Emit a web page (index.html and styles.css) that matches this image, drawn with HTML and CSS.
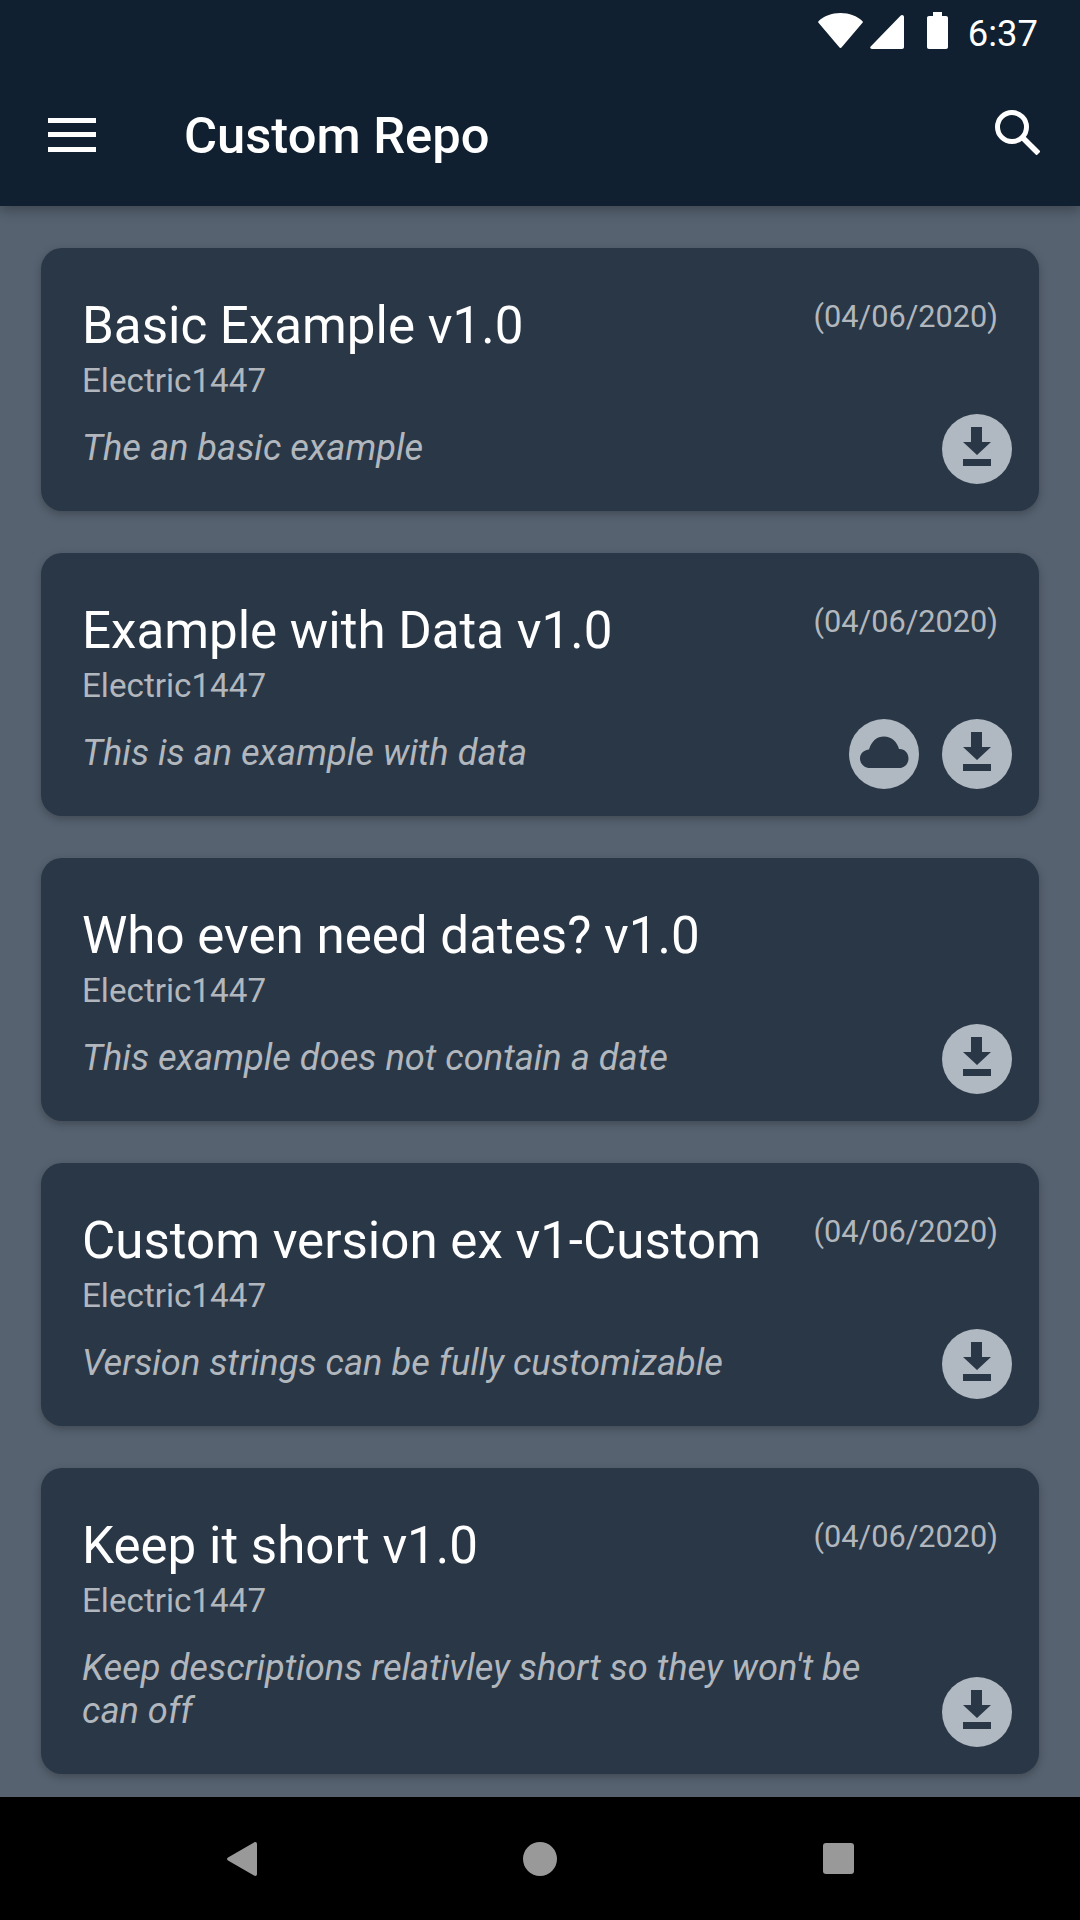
FILE: index.html
```html
<!DOCTYPE html>
<html lang="en">

<head>
    <meta charset="UTF-8">
    <meta name="viewport" content="width=device-width, initial-scale=1.0">
    <title>Custom Repo</title>
    <link rel="stylesheet" href="styles.css">
</head>

<body>
    <header class="app-header">
        <div class="status-bar">
            <svg class="wifi-icon" viewBox="0 0 45 35"><path d="M22.5 0C13.5 0 6 3 .5 8.2c-.5.5-.5 1 0 1.5l20.8 24.6c.6.8 1.8.8 2.4 0L44.500 9.700c.5-.5.5-1 0-1.500C39 3 31.500 0 22.500 0z"/></svg>
            <svg class="signal-icon" viewBox="0 0 34 34"><path d="M32 0c1.200 0 2 .8 2 2v30c0 1.200-.8 2-2 2H2c-1.600 0-2.400-1.400-1.300-2.500L30.500.7C31 .2 31.500 0 32 0z"/></svg>
            <svg class="battery-icon" viewBox="0 0 21 37"><path d="M6 0h9v4h4c1.200 0 2 .8 2 2v29c0 1.200-.8 2-2 2H2c-1.200 0-2-.8-2-2V6c0-1.200.8-2 2-2h4z"/></svg>
            <span class="clock">6:37</span>
        </div>
        <div class="toolbar">
            <div class="menu-btn">
                <span></span>
                <span></span>
                <span></span>
            </div>
            <h1 class="app-title">Custom Repo</h1>
            <svg class="search-icon" viewBox="0 0 45 45"><circle cx="17" cy="17" r="14.500" fill="none" stroke="#fff" stroke-width="5"/><path d="M27.500 27.500L43.500 43.500" fill="none" stroke="#fff" stroke-width="5.500"/></svg>
        </div>
    </header>

    <main class="repo-list">
        <div class="repo-card">
            <div class="card-top">
                <h2 class="repo-name">Basic Example v1.0</h2>
                <span class="repo-date">(04/06/2020)</span>
            </div>
            <p class="repo-author">Electric1447</p>
            <div class="card-bottom">
                <p class="repo-desc">The an basic example</p>
                <div class="card-actions">
                    <div class="round-btn"><svg viewBox="0 0 70 70"><path d="M29 13h11v15h9L35 41 21 28h8zM21 45h28v7H21z"/></svg></div>
                </div>
            </div>
        </div>

        <div class="repo-card">
            <div class="card-top">
                <h2 class="repo-name">Example with Data v1.0</h2>
                <span class="repo-date">(04/06/2020)</span>
            </div>
            <p class="repo-author">Electric1447</p>
            <div class="card-bottom">
                <p class="repo-desc">This is an example with data</p>
                <div class="card-actions">
                    <div class="round-btn"><svg viewBox="0 0 70 70"><path d="M21 49C14.500 49 11 44 11 39.500 11 34.500 15 31 20 30.500 22.500 22 28 17.500 35 17.500c7.500 0 13 5 15 12.500 5-.5 9.500 3.500 9.500 9.500 0 5-4 9.500-9 9.500z"/></svg></div>
                    <div class="round-btn"><svg viewBox="0 0 70 70"><path d="M29 13h11v15h9L35 41 21 28h8zM21 45h28v7H21z"/></svg></div>
                </div>
            </div>
        </div>

        <div class="repo-card">
            <div class="card-top">
                <h2 class="repo-name">Who even need dates? v1.0</h2>
            </div>
            <p class="repo-author">Electric1447</p>
            <div class="card-bottom">
                <p class="repo-desc">This example does not contain a date</p>
                <div class="card-actions">
                    <div class="round-btn"><svg viewBox="0 0 70 70"><path d="M29 13h11v15h9L35 41 21 28h8zM21 45h28v7H21z"/></svg></div>
                </div>
            </div>
        </div>

        <div class="repo-card">
            <div class="card-top">
                <h2 class="repo-name">Custom version ex v1-Custom</h2>
                <span class="repo-date">(04/06/2020)</span>
            </div>
            <p class="repo-author">Electric1447</p>
            <div class="card-bottom">
                <p class="repo-desc">Version strings can be fully customizable</p>
                <div class="card-actions">
                    <div class="round-btn"><svg viewBox="0 0 70 70"><path d="M29 13h11v15h9L35 41 21 28h8zM21 45h28v7H21z"/></svg></div>
                </div>
            </div>
        </div>

        <div class="repo-card">
            <div class="card-top">
                <h2 class="repo-name">Keep it short v1.0</h2>
                <span class="repo-date">(04/06/2020)</span>
            </div>
            <p class="repo-author">Electric1447</p>
            <div class="card-bottom">
                <p class="repo-desc">Keep descriptions relativley short so they won't be can off</p>
                <div class="card-actions">
                    <div class="round-btn"><svg viewBox="0 0 70 70"><path d="M29 13h11v15h9L35 41 21 28h8zM21 45h28v7H21z"/></svg></div>
                </div>
            </div>
        </div>
    </main>

    <nav class="nav-bar">
        <div class="nav-item"><svg class="nav-back" viewBox="0 0 30 34"><path d="M27 .5c1.500-1 3-.3 3 1.500v30c0 1.800-1.500 2.500-3 1.500L1 18.500c-1.300-.8-1.300-2.200 0-3z"/></svg></div>
        <div class="nav-item"><div class="nav-home"></div></div>
        <div class="nav-item"><div class="nav-recent"></div></div>
    </nav>
</body>

</html>
```

FILE: styles.css
```css
* {
    margin: 0;
    padding: 0;
    box-sizing: border-box;
    font-family: 'Roboto', sans-serif;
}

html, body {
    width: 1080px;
    height: 1920px;
    overflow: hidden;
}

body {
    background-color: #566270;
    display: flex;
    flex-direction: column;
}

.app-header {
    background-color: #102030;
    height: 206px;
    flex-shrink: 0;
    box-shadow: 0 4px 12px rgba(0, 0, 0, 0.3);
    position: relative;
}

/* status bar */
.status-bar {
    height: 63px;
    display: flex;
    align-items: flex-start;
    padding: 12px 42px 0 0;
    justify-content: flex-end;
}

.status-bar svg {
    fill: #ffffff;
    flex-shrink: 0;
}

.wifi-icon {
    width: 45px;
    height: 35px;
    margin-top: 1px;
}

.signal-icon {
    width: 34px;
    height: 34px;
    margin: 3px 0 0 7px;
}

.battery-icon {
    width: 21px;
    height: 37px;
    margin-left: 23px;
}

.clock {
    color: #ffffff;
    font-size: 36.4px;
    line-height: 43px;
    margin-left: 20px;
}

/* toolbar */
.toolbar {
    display: flex;
    align-items: center;
    height: 143px;
    padding: 0 40px 0 48px;
}

.menu-btn {
    width: 48px;
    height: 34px;
    display: flex;
    flex-direction: column;
    justify-content: space-between;
}

.menu-btn span {
    height: 5px;
    background-color: #ffffff;
}

.app-title {
    flex: 1;
    color: #ffffff;
    font-size: 50.7px;
    font-weight: 500;
    margin: 2px 0 0 88px;
}

.search-icon {
    width: 45px;
    height: 45px;
    margin-bottom: 4px;
}

/* cards */
.repo-list {
    flex: 1;
    display: flex;
    flex-direction: column;
    gap: 42px;
    padding: 42px 41px 0;
    overflow: hidden;
}

.repo-card {
    background-color: #2a3747;
    border-radius: 21px;
    padding: 47px 27px 27px 41px;
    box-shadow: 0 3px 8px rgba(0, 0, 0, 0.25);
    flex-shrink: 0;
}

.card-top {
    display: flex;
    justify-content: space-between;
    align-items: flex-start;
    padding-right: 14px;
}

.repo-name {
    color: #ffffff;
    font-size: 51.1px;
    font-weight: 400;
    line-height: 62px;
}

.repo-date {
    color: #b2b7be;
    font-size: 30.7px;
    line-height: 37px;
    margin-top: 3px;
}

.repo-author {
    color: #b2b7be;
    font-size: 33.2px;
    line-height: 42px;
    margin-top: 3px;
}

.card-bottom {
    display: flex;
    justify-content: space-between;
    align-items: flex-end;
    margin-top: 12px;
}

.repo-desc {
    color: #b2b7be;
    font-size: 36.25px;
    font-style: italic;
    line-height: 42.5px;
    padding: 13px 0 14.5px;
    max-width: 800px;
}

.card-actions {
    display: flex;
    gap: 23px;
}

.round-btn {
    width: 70px;
    height: 70px;
    border-radius: 50%;
    background-color: #b0b9c2;
}

.round-btn svg {
    display: block;
    width: 70px;
    height: 70px;
    fill: #2a3747;
}

/* system nav */
.nav-bar {
    height: 123px;
    background-color: #000000;
    flex-shrink: 0;
    display: flex;
    justify-content: center;
    align-items: center;
    position: relative;
}

.nav-item {
    width: 298px;
    display: flex;
    justify-content: center;
}

.nav-back {
    width: 30px;
    height: 34px;
    fill: #999999;
}

.nav-home {
    width: 34px;
    height: 34px;
    border-radius: 50%;
    background-color: #999999;
}

.nav-recent {
    width: 31px;
    height: 31px;
    border-radius: 3px;
    background-color: #999999;
}
```
